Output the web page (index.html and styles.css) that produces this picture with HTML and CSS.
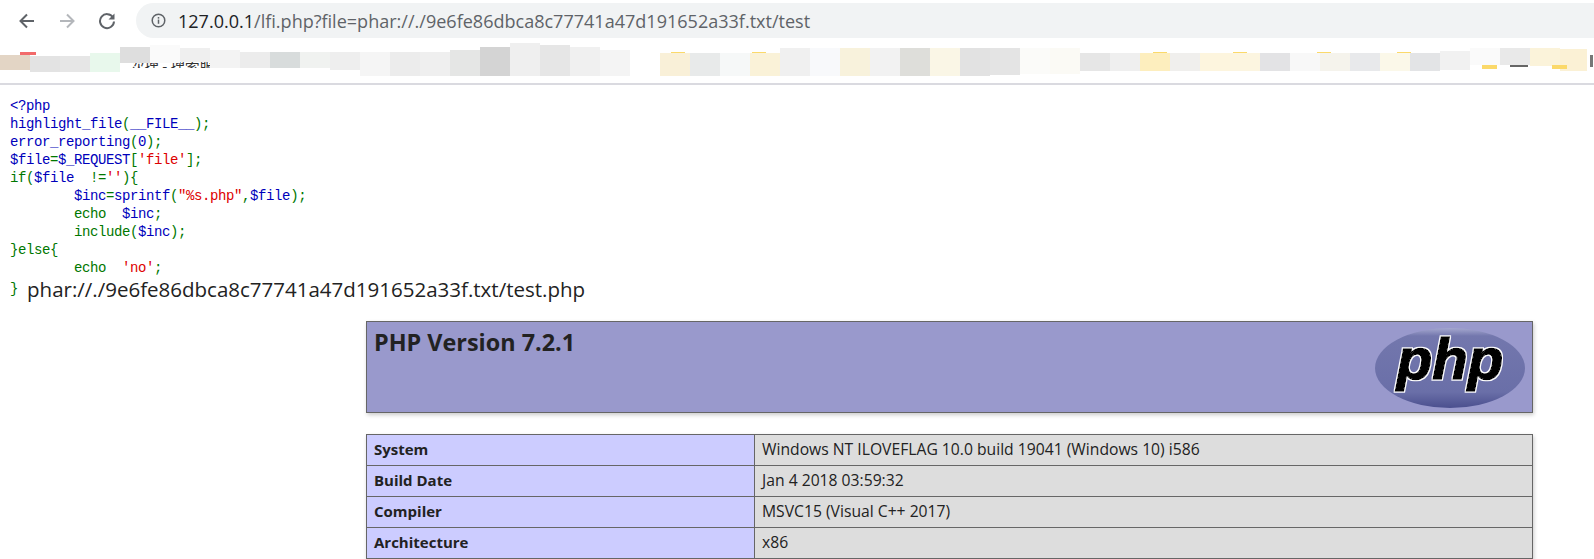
FILE: index.html
```html
<!DOCTYPE html>
<html lang="en">
<head>
<meta charset="utf-8">
<title>phpinfo</title>
<link rel="stylesheet" href="styles.css">
</head>
<body>
<header class="chrome">
  <div class="toolbar">
    <svg class="nav back" viewBox="0 0 18 18"><path d="M16 9H3M9 2.500L2.500 9L9 15.500" fill="none" stroke="#5f6368" stroke-width="2"/></svg>
    <svg class="nav forward" viewBox="0 0 18 18"><path d="M2 9H15M9 2.500L15.500 9L9 15.500" fill="none" stroke="#b4b7bb" stroke-width="2"/></svg>
    <svg class="nav reload" viewBox="0 0 18 18"><path d="M15 5.500A7 7 0 1 0 16 9.500" fill="none" stroke="#5f6368" stroke-width="2"/><path d="M16.500 1.500V7.500H10.500Z" fill="#5f6368"/></svg>
    <div class="omnibox">
      <svg class="info" viewBox="0 0 16 16"><circle cx="8" cy="8" r="6.700" fill="none" stroke="#5f6368" stroke-width="1.600"/><rect x="7.200" y="7" width="1.600" height="4.500" fill="#5f6368"/><rect x="7.200" y="4.300" width="1.600" height="1.700" fill="#5f6368"/></svg>
      <span class="url"><span class="host">127.0.0.1</span>/lfi.php?file=phar://./9e6fe86dbca8c77741a47d191652a33f.txt/test</span>
    </div>
  </div>
  <svg class="bookmarks" viewBox="0 0 1594 40" width="1594" height="40">
    <defs><clipPath id="snip"><rect x="128" y="19" width="96" height="6"/></clipPath></defs>
    <text x="130" y="29" class="snippet" clip-path="url(#snip)">次搜 - 搜索服</text>
    <rect x="20" y="9" width="16" height="3" fill="#f26a6a"/>
    <rect x="0" y="12" width="30" height="15" fill="#e3d5c5"/>
    <rect x="30" y="13" width="30" height="16" fill="#e3e3e3"/>
    <rect x="60" y="13" width="30" height="16" fill="#e6e6e6"/>
    <rect x="90" y="10" width="30" height="19" fill="#e8f8ec"/>
    <rect x="120" y="4" width="30" height="16" fill="#dedede"/>
    <rect x="150" y="2" width="30" height="18" fill="#fafafa"/>
    <rect x="180" y="5" width="30" height="14" fill="#efefef"/>
    <rect x="210" y="7" width="30" height="18" fill="#f3f3f3"/>
    <rect x="240" y="9" width="30" height="16" fill="#ececec"/>
    <rect x="270" y="9" width="30" height="16" fill="#d8dcdc"/>
    <rect x="300" y="9" width="30" height="16" fill="#f0f2f0"/>
    <rect x="330" y="9" width="30" height="18" fill="#eeeeee"/>
    <rect x="360" y="9" width="30" height="24" fill="#f5f5f5"/>
    <rect x="390" y="9" width="30" height="24" fill="#ececec"/>
    <rect x="420" y="9" width="30" height="24" fill="#efefef"/>
    <rect x="450" y="7" width="30" height="26" fill="#e5e6e5"/>
    <rect x="480" y="4" width="30" height="29" fill="#d4d4d4"/>
    <rect x="510" y="0" width="30" height="33" fill="#efefef"/>
    <rect x="540" y="2" width="30" height="31" fill="#e6e6e6"/>
    <rect x="570" y="4" width="30" height="29" fill="#f0f0f0"/>
    <rect x="600" y="7" width="30" height="26" fill="#f4f4f4"/>
    <rect x="660" y="10" width="30" height="23" fill="#f9f0d8"/>
    <rect x="690" y="10" width="30" height="23" fill="#e8eaea"/>
    <rect x="720" y="10" width="30" height="23" fill="#f6f8f8"/>
    <rect x="750" y="10" width="30" height="23" fill="#faf2d8"/>
    <rect x="780" y="5" width="30" height="28" fill="#f0f0f0"/>
    <rect x="810" y="5" width="30" height="28" fill="#f8f9fb"/>
    <rect x="840" y="5" width="30" height="28" fill="#f8f2dc"/>
    <rect x="870" y="5" width="30" height="28" fill="#f2f2f2"/>
    <rect x="900" y="5" width="30" height="28" fill="#dededa"/>
    <rect x="930" y="5" width="30" height="28" fill="#faf6e6"/>
    <rect x="960" y="5" width="30" height="28" fill="#e2e2e2"/>
    <rect x="990" y="5" width="30" height="27" fill="#e4e4e4"/>
    <rect x="1020" y="5" width="30" height="26" fill="#fbfbf9"/>
    <rect x="1050" y="5" width="30" height="26" fill="#fbfaf5"/>
    <rect x="1080" y="10" width="30" height="18" fill="#e6e6e6"/>
    <rect x="1110" y="10" width="30" height="18" fill="#efefef"/>
    <rect x="1140" y="10" width="30" height="18" fill="#fdeebe"/>
    <rect x="1170" y="10" width="30" height="18" fill="#f0efed"/>
    <rect x="1200" y="10" width="30" height="18" fill="#fdf5de"/>
    <rect x="1230" y="10" width="30" height="18" fill="#fcf5e0"/>
    <rect x="1260" y="10" width="30" height="18" fill="#e3e3e5"/>
    <rect x="1290" y="10" width="30" height="18" fill="#f8f8f8"/>
    <rect x="1320" y="10" width="30" height="18" fill="#f5f3ec"/>
    <rect x="1350" y="10" width="30" height="18" fill="#e8e9eb"/>
    <rect x="1380" y="10" width="30" height="18" fill="#fbf8e9"/>
    <rect x="1410" y="10" width="30" height="18" fill="#e3e4e6"/>
    <rect x="1440" y="8" width="30" height="19" fill="#f1f1f1"/>
    <rect x="1470" y="5" width="30" height="17" fill="#fafafa"/>
    <rect x="1500" y="5" width="30" height="17" fill="#e9e9e9"/>
    <rect x="1530" y="5" width="30" height="18" fill="#fbf3da"/>
    <rect x="1560" y="6" width="27" height="22" fill="#fbf1d5"/>
    <g fill="#fbd96a">
      <rect x="671" y="9" width="14" height="1"/>
      <rect x="752" y="9" width="14" height="1"/>
      <rect x="1153" y="9" width="14" height="1"/>
      <rect x="1233" y="9" width="14" height="1"/>
      <rect x="1317" y="9" width="14" height="1"/>
      <rect x="1397" y="9" width="14" height="1"/>
      <rect x="1482" y="22" width="15" height="4"/>
      <rect x="1552" y="22" width="15" height="4"/>
    </g>
    <rect x="1590" y="12" width="3" height="12" fill="#777"/>
    <rect x="1510" y="22" width="18" height="2" fill="#666"/>
  </svg>
</header>

<main class="page">
  <code class="source"><span class="def">&lt;?php</span><br><span class="def">highlight_file</span><span class="kw">(</span><span class="def">__FILE__</span><span class="kw">);</span><br><span class="def">error_reporting</span><span class="kw">(</span><span class="def">0</span><span class="kw">);</span><br><span class="def">$file</span><span class="kw">=</span><span class="def">$_REQUEST</span><span class="kw">[</span><span class="str">'file'</span><span class="kw">];</span><br><span class="kw">if(</span><span class="def">$file</span><span class="kw">  !=</span><span class="str">''</span><span class="kw">){</span><br><span class="def">        $inc</span><span class="kw">=</span><span class="def">sprintf</span><span class="kw">(</span><span class="str">"%s.php"</span><span class="kw">,</span><span class="def">$file</span><span class="kw">);</span><br><span class="kw">        echo  </span><span class="def">$inc</span><span class="kw">;</span><br><span class="kw">        include(</span><span class="def">$inc</span><span class="kw">);</span><br><span class="kw">}else{</span><br><span class="kw">        echo  </span><span class="str">'no'</span><span class="kw">;</span><br></code>
  <div class="output"><code class="source"><span class="kw">}</span></code><span class="path">phar://./9e6fe86dbca8c77741a47d191652a33f.txt/test.php</span></div>

  <div class="info-page">
    <div class="banner">
      <h1>PHP Version 7.2.1</h1>
      <svg class="php-logo" viewBox="0 0 152 82" width="152" height="82">
        <defs>
          <linearGradient id="oval" x1="0" y1="0" x2="0" y2="1">
            <stop offset="0" stop-color="#a5a8cf"/>
            <stop offset=".1" stop-color="#7377ad"/>
            <stop offset=".8" stop-color="#6a6fa8"/>
            <stop offset="1" stop-color="#4b4f8e"/>
          </linearGradient>
          <filter id="halo" x="-5%" y="-5%" width="110%" height="110%">
            <feMorphology in="SourceAlpha" operator="dilate" radius="1.300" result="grown"/>
            <feFlood flood-color="#ffffff"/>
            <feComposite in2="grown" operator="in" result="outline"/>
            <feMerge>
              <feMergeNode in="outline"/>
              <feMergeNode in="SourceGraphic"/>
            </feMerge>
          </filter>
        </defs>
        <ellipse cx="76" cy="41" rx="75" ry="40" fill="url(#oval)"/>
        <text x="76" y="52" class="logo-text" filter="url(#halo)">php</text>
      </svg>
    </div>
    <table class="facts">
      <tr><th>System</th><td>Windows NT ILOVEFLAG 10.0 build 19041 (Windows 10) i586</td></tr>
      <tr><th>Build Date</th><td>Jan 4 2018 03:59:32</td></tr>
      <tr><th>Compiler</th><td>MSVC15 (Visual C++ 2017)</td></tr>
      <tr><th>Architecture</th><td>x86</td></tr>
      <tr><th></th><td></td></tr>
    </table>
  </div>
</main>
</body>
</html>
```

FILE: styles.css
```css
html, body {
  margin: 0;
  padding: 0;
  background: #fff;
  height: 559px;
  overflow: hidden;
}

body {
  font-family: "Open Sans", "Liberation Sans", sans-serif;
  color: #222;
}

.chrome {
  box-sizing: content-box;
  height: 80px;
  padding-top: 3px;
  border-bottom: 2px solid #dadae0;
  overflow: hidden;
}

.toolbar {
  display: flex;
  align-items: center;
  height: 35px;
  padding-left: 18px;
}

.nav {
  width: 18px;
  height: 18px;
  flex: none;
}

.forward { margin-left: 22px; }
.reload { margin-left: 22px; }

.omnibox {
  flex: 1;
  height: 35px;
  margin-left: 20px;
  margin-right: -20px;
  display: flex;
  align-items: center;
  background: #f1f3f4;
  border-radius: 18px 0 0 18px;
  padding-left: 15px;
}

.info {
  width: 15px;
  height: 15px;
  flex: none;
}

.url {
  margin-left: 12px;
  font-family: "Open Sans", sans-serif;
  font-size: 18.050px;
  color: #5f6368;
  white-space: nowrap;
}

.host { color: #202124; }

.bookmarks {
  display: block;
  margin-top: 5px;
}

.snippet {
  font-family: "Noto Sans CJK SC", sans-serif;
  font-size: 14.500px;
  fill: #333;
}

.page {
  display: block;
  padding: 12px 0 0 10px;
}

.source {
  font-family: "Liberation Mono", monospace;
  font-size: 14px;
  letter-spacing: -0.400px;
  line-height: 18px;
  white-space: pre;
  display: block;
}

.def { color: #0000bb; }
.kw { color: #007700; }
.str { color: #dd0000; }

.output {
  display: flex;
  align-items: center;
  height: 24px;
}

.path {
  margin-left: 9px;
  font-size: 20.500px;
  color: #222;
  white-space: nowrap;
}

.info-page {
  margin: 20px 0 0 356px;
  width: 1167px;
}

.banner {
  position: relative;
  box-sizing: border-box;
  height: 92px;
  background: #9999cc;
  border: 1px solid #666;
  box-shadow: 1px 2px 4px #ccc;
  padding: 4px 7px;
}

h1 {
  margin: 0;
  font-size: 23.400px;
  line-height: 33px;
  font-weight: 700;
  color: #222;
}

.php-logo {
  position: absolute;
  right: 6px;
  top: 5px;
}

.logo-text {
  font-family: "Liberation Sans", sans-serif;
  font-size: 58px;
  font-weight: 700;
  font-style: italic;
  fill: #000;
  stroke: #000;
  stroke-width: 1.500px;
  text-anchor: middle;
}

.facts {
  width: 1167px;
  margin-top: 21px;
  border-collapse: collapse;
  table-layout: fixed;
  box-shadow: 1px 2px 4px #ccc;
}

.facts tr { height: 31px; }

.facts th,
.facts td {
  border: 1px solid #666;
  padding: 0 7px 2px;
  line-height: 20px;
  text-align: left;
  color: #222;
}

.facts th {
  width: 373px;
  background: #ccccff;
  font-size: 15px;
  font-weight: 700;
}

.facts td {
  background: #dddddd;
  font-size: 15.700px;
}
```
